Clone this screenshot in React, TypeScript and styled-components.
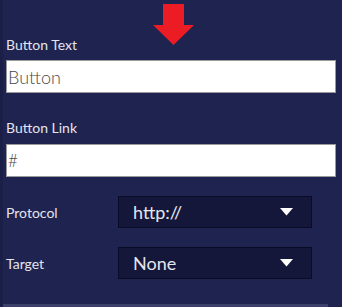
import React from "react";
import styled, { createGlobalStyle } from "styled-components";

const Global = createGlobalStyle`
  html, body { margin: 0; padding: 0; background: #1f2350; }
  body { font-family: Lato, "Open Sans", sans-serif; }
`;

const Panel = styled.div`
  width: 342px;
  height: 307px;
  box-sizing: border-box;
  background: #1f2350;
  border-left: 3px solid #1b1e47;
  display: flex;
  flex-direction: column;
  padding: 4px 6px 0 3px;
  position: relative;
  overflow: hidden;
`;

const ArrowRow = styled.div`
  height: 41px;
  display: flex;
  padding-left: 147px;
`;

const Label = styled.label<{ $top?: number }>`
  display: block;
  color: #e4e5ee;
  font-size: 14px;
  line-height: 17px;
  margin-top: ${(p) => p.$top ?? 0}px;
`;

const TextInput = styled.div<{ $top?: number; $size?: number }>`
  box-sizing: border-box;
  height: 33px;
  margin-top: ${(p) => p.$top ?? 0}px;
  background: #fff;
  border: 1px solid #9a9a9a;
  color: #4a4a4a;
  font-size: ${(p) => p.$size ?? 18}px;
  font-weight: 300;
  display: flex;
  align-items: center;
  padding-left: 1px;
`;

const Row = styled.div<{ $top?: number }>`
  display: flex;
  align-items: center;
  margin-top: ${(p) => p.$top ?? 0}px;
`;

const RowLabel = styled.span`
  width: 112px;
  color: #e4e5ee;
  font-size: 14px;
`;

const Select = styled.div`
  box-sizing: border-box;
  width: 194px;
  height: 32px;
  background: #14173a;
  border: 1px solid #0a0c26;
  color: #e4e5ee;
  font-size: 18px;
  display: flex;
  align-items: center;
  justify-content: space-between;
  padding: 0 18px 0 14px;
`;

const Caret = styled.svg`
  width: 13px;
  height: 8px;
`;

const BottomBar = styled.div`
  position: absolute;
  left: -3px;
  bottom: 0;
  width: 328px;
  height: 3px;
  background: #3b3f6a;
`;

const DownArrow = () => (
  <svg width="41" height="41" viewBox="0 0 41 41">
    <polygon points="10,0 31,0 31,21 41,21 20.5,41 0,21 10,21" fill="#ec1c24" />
  </svg>
);

const SelectBox = ({ value }: { value: string }) => (
  <Select>
    <span>{value}</span>
    <Caret viewBox="0 0 13 8">
      <polygon points="0,0 13,0 6.5,7.5" fill="#fff" />
    </Caret>
  </Select>
);

export default function App() {
  return (
    <>
      <Global />
      <Panel>
        <ArrowRow>
          <DownArrow />
        </ArrowRow>
        <Label $top={-9}>Button Text</Label>
        <TextInput $top={7}>Button</TextInput>
        <Label $top={26}>Button Link</Label>
        <TextInput $top={8} $size={17}>#</TextInput>
        <Row $top={19}>
          <RowLabel>Protocol</RowLabel>
          <SelectBox value="http://" />
        </Row>
        <Row $top={19}>
          <RowLabel>Target</RowLabel>
          <SelectBox value="None" />
        </Row>
        <BottomBar />
      </Panel>
    </>
  );
}
